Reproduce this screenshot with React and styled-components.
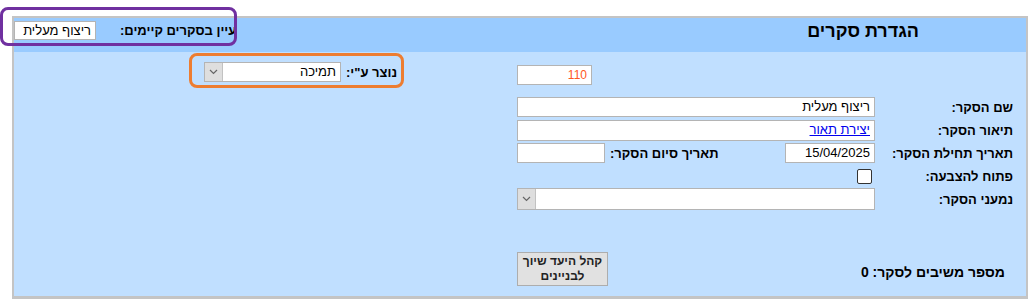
import React from 'react';
import styled, { createGlobalStyle } from 'styled-components';

const GlobalStyle = createGlobalStyle`
  body {
    margin: 0;
    background: #fff;
    font-family: "Liberation Sans", Arial, sans-serif;
  }
`;

const Chevron = () => (
  <svg width="9" height="6" viewBox="0 0 9 6">
    <path d="M1 1 L4.5 4.5 L8 1" fill="none" stroke="#666" strokeWidth="1.2" />
  </svg>
);

const Dropdown = ({ value, width, height }) => (
  <SelectBox $width={width} $height={height}>
    <SelectText>{value}</SelectText>
    <ArrowBtn>
      <Chevron />
    </ArrowBtn>
  </SelectBox>
);

const App = () => {
  return (
    <Page>
      <GlobalStyle />
      <Panel dir="rtl">
        <Header>
          <Title>הגדרת סקרים</Title>
          <Browse>
            <HeaderLabel>עיין בסקרים קיימים:</HeaderLabel>
            <TextBox $width="82px" $height="19px">ריצוף מעלית</TextBox>
          </Browse>
        </Header>

        <Body>
          <Row $gap="12px">
            <Label />
            <Field $end>
              <TextBox $width="75px" $color="#ff5722" $size="12px" $top="3px">110</TextBox>
            </Field>
            <Side>
              <Label>נוצר ע"י:</Label>
              <Dropdown value="תמיכה" width="137px" height="20px" />
            </Side>
          </Row>

          <Row>
            <Label>שם הסקר:</Label>
            <Field>
              <TextBox>ריצוף מעלית</TextBox>
            </Field>
          </Row>

          <Row $gap="2px">
            <Label>תיאור הסקר:</Label>
            <Field>
              <TextBox $height="21px">
                <Link href="#">יצירת תאור</Link>
              </TextBox>
            </Field>
          </Row>

          <Row>
            <Label>תאריך תחילת הסקר:</Label>
            <Field $split>
              <TextBox $width="90px">15/04/2025</TextBox>
              <Pair>
                <Label>תאריך סיום הסקר:</Label>
                <TextBox $width="88px" />
              </Pair>
            </Field>
          </Row>

          <Row $gap="2px">
            <Label>פתוח להצבעה:</Label>
            <Field>
              <Check />
            </Field>
          </Row>

          <Row $gap="42px">
            <Label>נמעני הסקר:</Label>
            <Field>
              <Dropdown value="" width="358px" height="22px" />
            </Field>
          </Row>

          <Row>
            <Count>מספר משיבים לסקר: 0</Count>
            <Field $end>
              <GrayButton>
                קהל היעד שיוך
                <br />
                לבניינים
              </GrayButton>
            </Field>
          </Row>
        </Body>
      </Panel>

      <Callout $color="#7030a0" style={{ left: 0, top: 7, width: 237, height: 39 }} />
      <Callout $color="#ed7d31" style={{ left: 189, top: 53, width: 215, height: 35 }} />
    </Page>
  );
};

const Page = styled.div`
  position: relative;
  width: 1028px;
  height: 299px;
  padding: 16px 0 0 12px;
  box-sizing: border-box;
  overflow: hidden;
`;

const Panel = styled.div`
  height: 283px;
  border: 2px solid #c4c4c4;
  border-bottom-width: 3px;
  box-sizing: border-box;
  background: #c0dfff;
  display: flex;
  flex-direction: column;
`;

const Header = styled.div`
  height: 34px;
  background: #99cbff;
  display: flex;
  justify-content: space-between;
  align-items: flex-start;
  padding: 3px 107px 0 0;
  box-sizing: border-box;
`;

const Title = styled.div`
  font-size: 18px;
  font-weight: bold;
  line-height: 21px;
  color: #000;
`;

const Browse = styled.div`
  display: flex;
  align-items: center;
  gap: 24px;
`;

const HeaderLabel = styled.span`
  font-size: 13px;
  font-weight: bold;
  color: #000;
  white-space: nowrap;
`;

const Body = styled.div`
  flex: 1;
  display: flex;
  flex-direction: column;
  padding: 10px 13px 0 0;
`;

const Row = styled.div`
  display: grid;
  grid-template-columns: 128px 358px 1fr;
  column-gap: 10px;
  align-items: center;
  margin-bottom: ${(p) => p.$gap || '3px'};
`;

const Label = styled.span`
  font-size: 13px;
  font-weight: bold;
  color: #000;
  white-space: nowrap;
`;

const Field = styled.div`
  display: flex;
  align-items: center;
  justify-content: ${(p) => (p.$split ? 'space-between' : p.$end ? 'flex-end' : 'flex-start')};
  min-height: 20px;
`;

const Side = styled.div`
  align-self: start;
  display: flex;
  align-items: center;
  gap: 5px;
  padding-right: 110px;
`;

const Pair = styled.div`
  display: flex;
  align-items: center;
  gap: 5px;
`;

const TextBox = styled.div`
  width: ${(p) => p.$width || '358px'};
  height: ${(p) => p.$height || '20px'};
  margin-top: ${(p) => p.$top || '0'};
  box-sizing: border-box;
  background: #fff;
  border: 1px solid #b4b4b4;
  padding: 0 4px;
  font-size: ${(p) => p.$size || '13px'};
  color: ${(p) => p.$color || '#000'};
  line-height: 18px;
  white-space: nowrap;
  overflow: hidden;
  flex-shrink: 0;
`;

const Link = styled.a`
  color: #0000ee;
  text-decoration: underline;
`;

const Check = styled.div`
  width: 13px;
  height: 13px;
  margin-right: 3px;
  background: #fff;
  border: 1px solid #333;
  border-radius: 2px;
`;

const SelectBox = styled.div`
  width: ${(p) => p.$width};
  height: ${(p) => p.$height || '21px'};
  box-sizing: border-box;
  display: flex;
  background: #fff;
  border: 1px solid #b4b4b4;
  flex-shrink: 0;
`;

const SelectText = styled.span`
  flex: 1;
  font-size: 13px;
  line-height: 18px;
  padding: 0 4px;
  color: #000;
`;

const ArrowBtn = styled.span`
  width: 17px;
  display: flex;
  align-items: center;
  justify-content: center;
  background: #dedede;
  border-right: 1px solid #c2c2c2;
`;

const Count = styled.span`
  font-size: 14px;
  font-weight: bold;
  color: #000;
  white-space: nowrap;
  padding-right: 8px;
  align-self: end;
  margin-bottom: 6px;
`;

const GrayButton = styled.div`
  width: 91px;
  height: 34px;
  box-sizing: border-box;
  background: #e1e1e1;
  border: 1px solid #adadad;
  font-size: 12px;
  font-weight: bold;
  color: #222;
  text-align: center;
  line-height: 15px;
  padding-top: 1px;
`;

const Callout = styled.div`
  position: absolute;
  box-sizing: border-box;
  border: 3px solid ${(p) => p.$color};
  border-radius: 8px;
`;

export default App;
